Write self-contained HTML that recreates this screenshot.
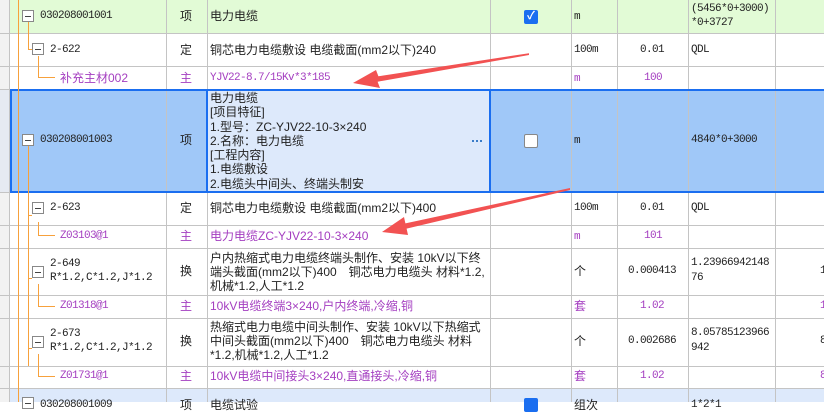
<!DOCTYPE html>
<html><head><meta charset="utf-8"><style>
*{margin:0;padding:0;box-sizing:border-box}
body{width:824px;height:402px;overflow:hidden;background:#fff;font-family:"Liberation Mono","Noto Sans CJK SC",monospace;font-size:11px;letter-spacing:-0.6px;color:#222;position:relative}
.a{position:absolute;white-space:nowrap;line-height:14px}
.bg{position:absolute}
.h{position:absolute;left:0;width:824px;height:1px;background:#c4c4c4}
.v{position:absolute;top:0;width:1px;height:402px;background:#c4c4c4}
.p{color:#a43ec0}
.o{position:absolute;background:#f7a13c}
.box{position:absolute;width:12px;height:12px;border:1px solid #888;background:#fff}
.box:after{content:"";position:absolute;left:2px;top:5px;width:6px;height:1px;background:#444}
.cjk{font-family:"Liberation Sans","Noto Sans CJK SC",sans-serif;font-size:12px;letter-spacing:0}
.dot{position:absolute;width:2px;height:2px;background:#3a7cc8}
</style></head><body>
<div class="bg" style="left:0;top:0;width:9px;height:402px;background:#f2f2f2"></div>
<div class="bg" style="left:10px;top:0;width:814px;height:33px;background:#e2fbd6"></div>
<div class="bg" style="left:10px;top:89px;width:814px;height:103px;background:#a0c8f8"></div>
<div class="bg" style="left:207px;top:89px;width:284px;height:103px;background:#dde9fb"></div>
<div class="bg" style="left:0;top:89px;width:9px;height:103px;background:#e6eaf2"></div>
<div class="bg" style="left:10px;top:389px;width:814px;height:13px;background:#dde9fb"></div>
<div class="h" style="top:33px"></div><div class="h" style="top:66px"></div><div class="h" style="top:89px"></div>
<div class="h" style="top:192px"></div><div class="h" style="top:225px"></div><div class="h" style="top:248px"></div>
<div class="h" style="top:295px"></div><div class="h" style="top:318px"></div><div class="h" style="top:366px"></div>
<div class="h" style="top:388px"></div>
<div class="v" style="left:9px"></div><div class="v" style="left:166px"></div><div class="v" style="left:207px"></div>
<div class="v" style="left:490px"></div><div class="v" style="left:571px"></div><div class="v" style="left:617px"></div>
<div class="v" style="left:688px"></div><div class="v" style="left:775px"></div>
<div class="bg" style="left:10px;top:89px;width:814px;height:104px;border:2px solid #1a6ef0;border-right:none"></div>
<div class="bg" style="left:206px;top:89px;width:2px;height:103px;background:#1a6ef0"></div>
<div class="bg" style="left:489px;top:89px;width:2px;height:103px;background:#1a6ef0"></div>
<div class="o" style="left:18px;top:0;width:1px;height:402px"></div>
<div class="o" style="left:28px;top:22px;width:1px;height:28px"></div>
<div class="o" style="left:28px;top:49px;width:4px;height:1px"></div>
<div class="o" style="left:38px;top:56px;width:1px;height:22px"></div>
<div class="o" style="left:38px;top:77px;width:17px;height:1px"></div>
<div class="o" style="left:28px;top:146px;width:1px;height:220px"></div>
<div class="o" style="left:28px;top:215px;width:4px;height:1px"></div>
<div class="o" style="left:28px;top:278px;width:4px;height:1px"></div>
<div class="o" style="left:28px;top:348px;width:4px;height:1px"></div>
<div class="o" style="left:38px;top:222px;width:1px;height:14px"></div>
<div class="o" style="left:38px;top:235px;width:17px;height:1px"></div>
<div class="o" style="left:38px;top:284px;width:1px;height:23px"></div>
<div class="o" style="left:38px;top:306px;width:17px;height:1px"></div>
<div class="o" style="left:38px;top:354px;width:1px;height:23px"></div>
<div class="o" style="left:38px;top:376px;width:17px;height:1px"></div>
<div class="box" style="left:22px;top:10px"></div>
<div class="box" style="left:32px;top:43px"></div>
<div class="box" style="left:22px;top:134px"></div>
<div class="box" style="left:32px;top:202px"></div>
<div class="box" style="left:32px;top:266px"></div>
<div class="box" style="left:32px;top:336px"></div>
<div class="box" style="left:22px;top:397px"></div>
<!-- row1 -->
<div class="a" style="left:40px;top:9px">030208001001</div>
<div class="a cjk" style="left:180px;top:9px">项</div>
<div class="a cjk" style="left:210px;top:9px">电力电缆</div>
<div class="bg" style="left:524px;top:10px;width:14px;height:14px;background:#1a6ef0;border-radius:2px;color:#fff;font-size:11px;line-height:14px;text-align:center;font-weight:bold;letter-spacing:0">✓</div>
<div class="a" style="left:574px;top:10px">m</div>
<div class="a" style="left:691px;top:2px">(5456*0+3000)</div>
<div class="a" style="left:691px;top:16px">*0+3727</div>
<!-- row2 -->
<div class="a" style="left:50px;top:43px">2-622</div>
<div class="a cjk" style="left:180px;top:43px">定</div>
<div class="a cjk" style="left:210px;top:43px">铜芯电力电缆敷设 电缆截面(mm2以下)240</div>
<div class="a" style="left:574px;top:43px">100m</div>
<div class="a" style="left:640px;top:43px">0.01</div>
<div class="a" style="left:691px;top:43px">QDL</div>
<!-- row3 -->
<div class="a p cjk" style="left:60px;top:71px">补充主材002</div>
<div class="a p cjk" style="left:180px;top:71px">主</div>
<div class="a p" style="left:210px;top:71px">YJV22-8.7/15Kv*3*185</div>
<div class="a p" style="left:574px;top:72px">m</div>
<div class="a p" style="left:644px;top:71px">100</div>
<!-- row4 -->
<div class="a" style="left:40px;top:133px">030208001003</div>
<div class="a cjk" style="left:180px;top:133px">项</div>
<div class="a cjk" style="left:210px;top:91px;line-height:14.3px">电力电缆<br>[项目特征]<br>1.型号：ZC-YJV22-10-3×240<br>2.名称：电力电缆<br>[工程内容]<br>1.电缆敷设<br>2.电缆头中间头、终端头制安</div>
<div class="dot" style="left:472px;top:140px"></div><div class="dot" style="left:476px;top:140px"></div><div class="dot" style="left:480px;top:140px"></div>
<div class="bg" style="left:524px;top:134px;width:14px;height:14px;background:#fff;border:1px solid #888;border-radius:2px"></div>
<div class="a" style="left:574px;top:134px">m</div>
<div class="a" style="left:691px;top:133px">4840*0+3000</div>
<!-- row5 -->
<div class="a" style="left:50px;top:201px">2-623</div>
<div class="a cjk" style="left:180px;top:201px">定</div>
<div class="a cjk" style="left:210px;top:201px">铜芯电力电缆敷设 电缆截面(mm2以下)400</div>
<div class="a" style="left:574px;top:201px">100m</div>
<div class="a" style="left:640px;top:201px">0.01</div>
<div class="a" style="left:691px;top:201px">QDL</div>
<!-- row6 -->
<div class="a p" style="left:60px;top:229px">Z03103@1</div>
<div class="a p cjk" style="left:180px;top:229px">主</div>
<div class="a p cjk" style="left:210px;top:229px">电力电缆ZC-YJV22-10-3×240</div>
<div class="a p" style="left:574px;top:230px">m</div>
<div class="a p" style="left:644px;top:229px">101</div>
<!-- row7 -->
<div class="a" style="left:50px;top:257px">2-649</div>
<div class="a" style="left:50px;top:271px">R*1.2,C*1.2,J*1.2</div>
<div class="a cjk" style="left:180px;top:264px">换</div>
<div class="a cjk" style="left:210px;top:251px;overflow:hidden;width:279px">户内热缩式电力电缆终端头制作、安装 10kV以下终<br>端头截面(mm2以下)400　铜芯电力电缆头 材料*1.2,<br>机械*1.2,人工*1.2</div>
<div class="a cjk" style="left:574px;top:264px">个</div>
<div class="a" style="left:628px;top:264px">0.000413</div>
<div class="a" style="left:691px;top:256px">1.23966942148</div>
<div class="a" style="left:691px;top:271px">76</div>
<div class="a" style="left:820px;top:264px">1</div>
<!-- row8 -->
<div class="a p" style="left:60px;top:299px">Z01318@1</div>
<div class="a p cjk" style="left:180px;top:299px">主</div>
<div class="a p cjk" style="left:210px;top:299px">10kV电缆终端3×240,户内终端,冷缩,铜</div>
<div class="a p cjk" style="left:574px;top:299px">套</div>
<div class="a p" style="left:640px;top:299px">1.02</div>
<div class="a p" style="left:820px;top:299px">1</div>
<!-- row9 -->
<div class="a" style="left:50px;top:327px">2-673</div>
<div class="a" style="left:50px;top:341px">R*1.2,C*1.2,J*1.2</div>
<div class="a cjk" style="left:180px;top:334px">换</div>
<div class="a cjk" style="left:210px;top:320px;overflow:hidden;width:279px">热缩式电力电缆中间头制作、安装 10kV以下热缩式<br>中间头截面(mm2以下)400　铜芯电力电缆头 材料<br>*1.2,机械*1.2,人工*1.2</div>
<div class="a cjk" style="left:574px;top:334px">个</div>
<div class="a" style="left:628px;top:334px">0.002686</div>
<div class="a" style="left:691px;top:326px">8.05785123966</div>
<div class="a" style="left:691px;top:341px">942</div>
<div class="a" style="left:820px;top:334px">8</div>
<!-- row10 -->
<div class="a p" style="left:60px;top:369px">Z01731@1</div>
<div class="a p cjk" style="left:180px;top:369px">主</div>
<div class="a p cjk" style="left:210px;top:369px">10kV电缆中间接头3×240,直通接头,冷缩,铜</div>
<div class="a p cjk" style="left:574px;top:369px">套</div>
<div class="a p" style="left:640px;top:369px">1.02</div>
<div class="a p" style="left:820px;top:369px">8</div>
<!-- row11 -->
<div class="a" style="left:40px;top:398px">030208001009</div>
<div class="a cjk" style="left:180px;top:398px">项</div>
<div class="a cjk" style="left:210px;top:398px">电缆试验</div>
<div class="bg" style="left:524px;top:398px;width:14px;height:14px;background:#1a6ef0;border-radius:2px"></div>
<div class="a cjk" style="left:574px;top:398px">组次</div>
<div class="a" style="left:691px;top:398px">1*2*1</div>
<svg style="position:absolute;left:0;top:0" width="824" height="402">
<polygon fill="#f25252" points="529,53.2 378.4,76.3 376,70 353,83 380,88 377.6,81.7 529,55"/>
<polygon fill="#f25252" points="570,188 405.4,223.4 404,217 382,232 408,235 406.6,228.6 570,190"/>
</svg>
</body></html>
